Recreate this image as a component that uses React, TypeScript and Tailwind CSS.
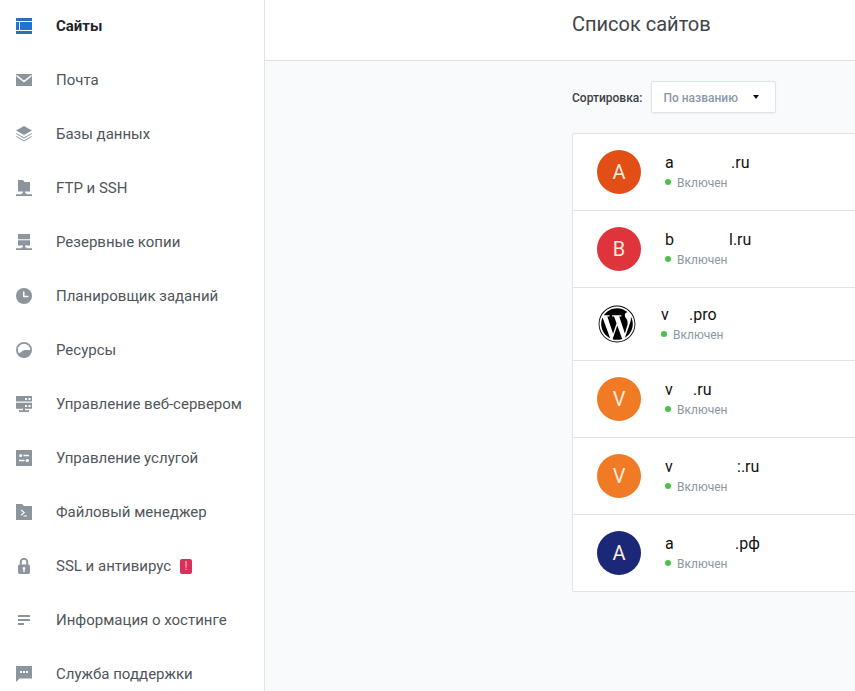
import React, { ReactNode } from "react";
import { FaWordpress } from "react-icons/fa";

function Icon({ children }: { children: ReactNode }) {
    return (
        <svg className="size-4 shrink-0" viewBox="0 0 16 16" fill="currentColor" aria-hidden="true">
            {children}
        </svg>
    );
}

const menu = [
    {
        name: "Сайты",
        active: true,
        icon: (
            <Icon>
                <path d="M0 0h16v3H0z M0 13h16v3H0z" fill="#2b6fae" />
                <path d="M0 4h3v8H0z M4 4h12v8H4z" fill="#1a75d6" />
            </Icon>
        ),
    },
    {
        name: "Почта",
        icon: (
            <Icon>
                <path d="M0 2h16v12H0z" />
                <path d="M0.5 3.5L8 9.5l7.5-6" fill="none" stroke="#fff" strokeWidth="1.6" />
            </Icon>
        ),
    },
    {
        name: "Базы данных",
        icon: (
            <Icon>
                <path d="M8 0l8 4.5L8 9 0 4.5z" />
                <path d="M0.3 7.5L8 12l7.7-4.5M0.3 10.5L8 15l7.7-4.5" fill="none" stroke="currentColor" strokeWidth="1" />
            </Icon>
        ),
    },
    {
        name: "FTP и SSH",
        icon: (
            <Icon>
                <path d="M2 0h5l1.5 2H14v9.5H2z M7 11h2v3H7z M0 14.2h16V16H0z M5.5 13.2h5V16h-5z" />
            </Icon>
        ),
    },
    {
        name: "Резервные копии",
        icon: (
            <Icon>
                <path d="M2 0h12v5.2H2z M2 6.2h12v5.2H2z M7 11h2v3H7z M0 14.2h16V16H0z M5.5 13.2h5V16h-5z" />
            </Icon>
        ),
    },
    {
        name: "Планировщик заданий",
        icon: (
            <Icon>
                <circle cx="8" cy="8" r="8" />
                <path d="M7.8 3.5v5h4.7" fill="none" stroke="#fff" strokeWidth="1.5" />
            </Icon>
        ),
    },
    {
        name: "Ресурсы",
        icon: (
            <Icon>
                <circle cx="8" cy="8" r="7.1" fill="none" stroke="currentColor" strokeWidth="1.8" />
                <path d="M2 11.5C5 11 6 8.5 8.5 8H15a7 7 0 0 1-13 3.5z" />
            </Icon>
        ),
    },
    {
        name: "Управление веб-сервером",
        icon: (
            <Icon>
                <path d="M0 0h16v5.6H0z M0 6.8h16v6H0z M7 12h2v3H7z M3 14.2h10V16H3z" />
                <path d="M9 2h2v2H9z M12.5 2h2v2h-2z M9 9h2v2H9z M12.5 9h2v2h-2z" fill="#fff" />
            </Icon>
        ),
    },
    {
        name: "Управление услугой",
        icon: (
            <Icon>
                <path d="M0 0h16v16H0z" />
                <path d="M7.5 5.5H13M3 10.5h5.5" stroke="#fff" strokeWidth="1.3" />
                <circle cx="4.7" cy="5.5" r="1.6" fill="#fff" />
                <circle cx="11.3" cy="10.5" r="1.6" fill="#fff" />
            </Icon>
        ),
    },
    {
        name: "Файловый менеджер",
        icon: (
            <Icon>
                <path d="M0 0h6l2 2h8v14H0z" />
                <path d="M5 6l3.2 2.6L5 11.2M7.5 12H11" fill="none" stroke="#fff" strokeWidth="1.1" />
            </Icon>
        ),
    },
    {
        name: "SSL и антивирус",
        alert: true,
        icon: (
            <Icon>
                <path d="M4.8 8V4a3.2 3.2 0 0 1 6.4 0v4" fill="none" stroke="currentColor" strokeWidth="1.9" />
                <rect x="2" y="6.5" width="12" height="9.5" rx="1.8" />
                <path d="M8 9a1.4 1.4 0 0 1 .7 2.6V14H7.3v-2.4A1.4 1.4 0 0 1 8 9z" fill="#fff" />
            </Icon>
        ),
    },
    {
        name: "Информация о хостинге",
        icon: (
            <Icon>
                <path d="M2 3h12v1.9H2z M2 7h12v1.9H2z M2 11h6v1.9H2z" />
            </Icon>
        ),
    },
    {
        name: "Служба поддержки",
        icon: (
            <Icon>
                <path d="M0 0h16v12.5H3.5L0 16z" />
                <path d="M4 5h2v2H4z M7 5h2v2H7z M10 5h2v2h-2z" fill="#fff" />
            </Icon>
        ),
    },
];

// offset is the distance from the first letter to the visible end of the domain
const sites = [
    { head: "a", tail: ".ru", offset: 66, letter: "A", color: "bg-[#e24e15]" },
    { head: "b", tail: "l.ru", offset: 64, letter: "B", color: "bg-[#e0343c]" },
    { head: "v", tail: ".pro", offset: 28 },
    { head: "v", tail: ".ru", offset: 28, letter: "V", color: "bg-[#f17a24]" },
    { head: "v", tail: ":.ru", offset: 72, letter: "V", color: "bg-[#f17a24]" },
    { head: "a", tail: ".рф", offset: 70, letter: "A", color: "bg-[#1b2878]" },
];

function Sidebar() {
    return (
        <nav className="w-[265px] shrink-0 border-r border-[#dfe4e6] bg-white px-4 pt-3.5">
            <ul className="flex flex-col gap-[30px]">
                {menu.map((item) => (
                    <li key={item.name}>
                        <a href="#" className="flex h-6 items-center text-[#8c959c]">
                            {item.icon}
                            <span className={item.active ? "ml-6 text-[15px] font-bold whitespace-nowrap text-[#212529]" : "ml-6 text-[15px] whitespace-nowrap text-[#50565a]"}>
                                {item.name}
                            </span>
                            {item.alert && (
                                <span className="ml-[9px] flex h-[15px] w-3 items-center justify-center rounded-xs bg-[#d8305a] text-xs text-[#f5b5c5]">!</span>
                            )}
                        </a>
                    </li>
                ))}
            </ul>
        </nav>
    );
}

function SiteRow({ site }: { site: (typeof sites)[number] }) {
    return (
        <li className="flex items-center gap-6 border-b border-[#dfe4e6] px-6 py-4">
            {site.letter ? (
                <div className={`flex size-11 shrink-0 items-center justify-center rounded-full text-xl text-[#fdebdc] ${site.color}`}>
                    {site.letter}
                </div>
            ) : (
                <div className="flex size-10 shrink-0 items-center justify-center">
                    <FaWordpress className="size-[38px] text-black" />
                </div>
            )}
            <div className="whitespace-nowrap">
                <a href="#" className="flex text-base leading-[22px] text-[#111]">
                    <span style={{ width: site.offset }}>{site.head}</span>
                    <span>{site.tail}</span>
                </a>
                <p className="flex items-center gap-1.5 text-xs leading-[18px] text-[#8a98a2]">
                    <span className="mb-0.5 size-1.5 rounded-full bg-[#4cc04a]" />
                    Включен
                </p>
            </div>
        </li>
    );
}

export default function App() {
    return (
        <div className="flex min-h-screen overflow-hidden bg-[#f8fafb] font-['Roboto',sans-serif]">
            <Sidebar />
            <main className="min-w-0 flex-1">
                <header className="border-b border-[#dae2e5] bg-white pt-2.5 pb-[22px] pl-[307px]">
                    <h1 className="text-xl leading-7 whitespace-nowrap text-[#404548]">Список сайтов</h1>
                </header>
                <div className="pt-5 pl-[307px]">
                    <div className="flex items-center gap-[9px] text-xs">
                        <label htmlFor="sort" className="pt-0.5 font-medium whitespace-nowrap text-[#3c4146]">Сортировка:</label>
                        <div className="relative">
                            <select id="sort" className="h-8 w-[125px] appearance-none rounded-xs border border-[#dfe4e6] bg-white px-[11px] pt-0.5 font-medium text-[#8a98a8] shadow-xs">
                                <option>По названию</option>
                            </select>
                            <svg className="pointer-events-none absolute top-3.5 right-4 h-1 w-2" viewBox="0 0 8 4" aria-hidden="true">
                                <path d="M1 0h6L4 4z" fill="#111" />
                            </svg>
                        </div>
                    </div>
                    <ul className="mt-5 rounded-l-xs border-t border-l border-[#dfe4e6] bg-white">
                        {sites.map((site, i) => (
                            <SiteRow key={i} site={site} />
                        ))}
                    </ul>
                </div>
            </main>
        </div>
    );
}
